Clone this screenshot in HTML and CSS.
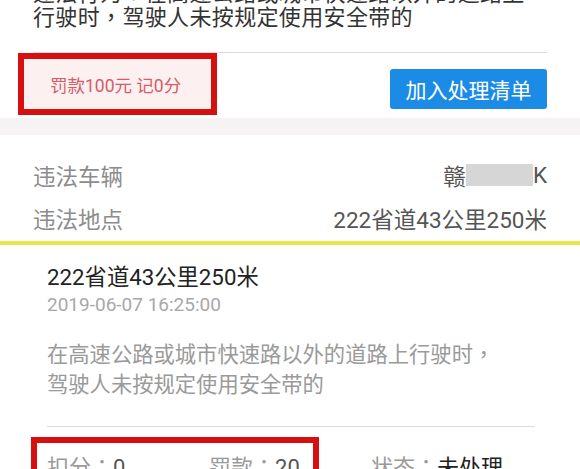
FILE: index.html
```html
<!DOCTYPE html>
<html lang="zh-CN">
<head>
    <meta charset="UTF-8">
    <meta name="viewport" content="width=device-width, initial-scale=1.0">
    <title>违法详情</title>
    <link rel="stylesheet" href="styles.css">
</head>
<body>
<div class="page">
    <div class="top-card">
        <p class="top-text">违法行为<span class="punct" lang="zh-TW">：</span>在高速公路或城市快速路以外的道路上行驶时<span class="punct" lang="zh-TW">，</span>驾驶人未按规定使用安全带的</p>
        <div class="divider"></div>
        <div class="fine-row">
            <span class="fine-pill">罚款100元 记0分</span>
            <button class="add-btn">加入处理清单</button>
        </div>
    </div>
    <div class="gap-band"></div>
    <div class="info">
        <div class="info-row">
            <span class="info-label">违法车辆</span>
            <span class="info-value">赣<span class="plate-blur"></span>K</span>
        </div>
        <div class="info-row last">
            <span class="info-label">违法地点</span>
            <span class="info-value">222省道43公里250米</span>
        </div>
    </div>
    <div class="yellow-line"></div>
    <div class="detail">
        <div class="detail-title">222省道43公里250米</div>
        <div class="detail-date">2019-06-07 16:25:00</div>
        <p class="detail-desc">在高速公路或城市快速路以外的道路上行驶时<span class="punct" lang="zh-TW">，</span>驾驶人未按规定使用安全带的</p>
        <div class="divider"></div>
        <div class="stats">
            <span>扣分<span class="punct" lang="zh-TW">：</span><b>0</b></span>
            <span>罚款<span class="punct" lang="zh-TW">：</span><b>20</b></span>
            <span>状态<span class="punct" lang="zh-TW">：</span><b class="dark">未处理</b></span>
        </div>
    </div>

    <!-- repères rouges -->
    <div class="mark mark-fine"></div>
    <div class="mark mark-stats"></div>
</div>
</body>
</html>
```

FILE: styles.css
```css
body {
    margin: 0;
    font-family: Roboto, "Noto Sans CJK SC", sans-serif;
    background: #fff;
}
.page {
    position: relative;
    width: 580px;
    height: 469px;
    overflow: hidden;
}
.punct {
    font-family: "Noto Sans CJK TC", sans-serif;
    line-height: 0;
}
.top-card {
    padding: 0 33px 0 24px;
}
.top-text {
    width: 505px;
    margin: -18px 0 0 9px;
    font-size: 22px;
    letter-spacing: 0.35px;
    line-height: 24px;
    color: #333;
}
.divider {
    height: 1px;
    background: #dcdcdc;
}
.top-card .divider {
    margin: 22px 0 0 9px;
}
.fine-row {
    display: flex;
    justify-content: space-between;
    align-items: flex-start;
    padding: 5px 0 8px;
}
.fine-pill {
    width: 164px;
    height: 52px;
    padding-left: 26px;
    display: flex;
    align-items: center;
    background: #fcf0f0;
    color: #d35d6b;
    font-size: 17.5px;
}
.add-btn {
    margin-top: 11px;
    width: 157px;
    height: 40px;
    border: none;
    border-radius: 3px;
    background: #1c8be6;
    color: #fff;
    font-family: inherit;
    font-size: 21px;
    padding: 0;
}
.gap-band {
    height: 17px;
    background: #f5f3f3;
}
.info {
    padding: 17px 33px 0;
}
.info-row {
    height: 46px;
    display: flex;
    justify-content: space-between;
    align-items: center;
    font-size: 22.5px;
}
.info-row.last {
    height: 43px;
    align-items: flex-start;
    padding-top: 8px;
    box-sizing: border-box;
}
.info-row.last span {
    line-height: 28px;
}
.info-label {
    color: #8c8c8c;
}
.info-value {
    color: #555;
    display: flex;
    align-items: center;
}
.plate-blur {
    display: inline-block;
    width: 67px;
    height: 22px;
    background: #d6d6d6;
}
.yellow-line {
    height: 4px;
    background: #ebe54a;
}
.detail {
    padding: 17px 45px 0 47px;
}
.detail-title {
    font-size: 22.3px;
    line-height: 30px;
    color: #222;
}
.detail-date {
    font-size: 19px;
    line-height: 26px;
    color: #a8a8a8;
}
.detail-desc {
    max-width: 462px;
    margin: 22px 0 0;
    font-size: 21.3px;
    line-height: 30px;
    color: #9a9a9a;
}
.detail .divider {
    margin-top: 26px;
}
.stats {
    margin-top: 26px;
    display: grid;
    grid-template-columns: 162px 162px 1fr;
    font-size: 22px;
    line-height: 30px;
    color: #9a9a9a;
}
.stats b {
    font-weight: normal;
    color: #555;
}
.stats b.dark {
    color: #222;
}
.mark {
    position: absolute;
    box-sizing: border-box;
    border: 6px solid #d5100f;
}
.mark-fine {
    left: 18px;
    top: 53px;
    width: 199px;
    height: 62px;
}
.mark-stats {
    left: 31px;
    top: 437px;
    width: 288px;
    height: 60px;
}
```
